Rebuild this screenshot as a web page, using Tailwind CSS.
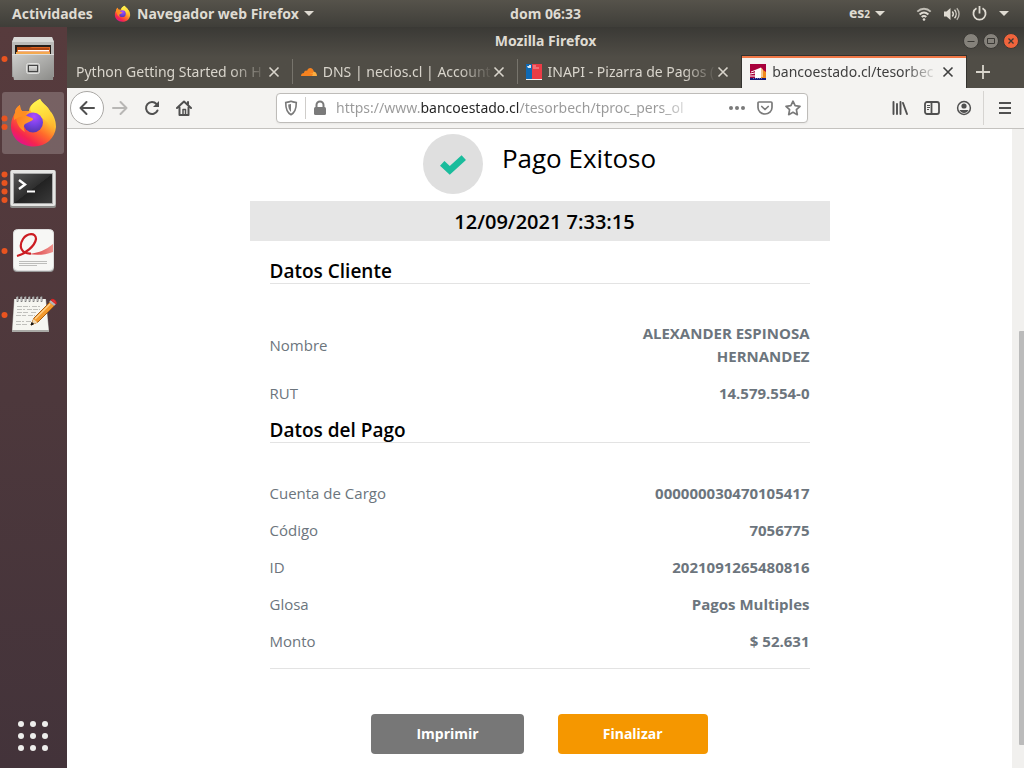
<!DOCTYPE html>
<html lang="es">
<head>
<meta charset="utf-8">
<meta name="viewport" content="width=device-width, initial-scale=1">
<title>Mozilla Firefox</title>
<script src="https://cdn.jsdelivr.net/npm/@tailwindcss/browser@4"></script>
</head>
<body class="flex h-screen flex-col overflow-hidden bg-white font-['Noto_Sans','Open_Sans',sans-serif]">

<!-- System bar -->
<header class="grid h-[27px] shrink-0 grid-cols-[1fr_auto_1fr] items-center bg-linear-to-b from-[#56534b] to-[#3f3e39] text-[14px] leading-5 font-bold text-[#dfdbd2]">
  <div class="flex items-center">
    <button class="ml-3 w-[84px] text-left whitespace-nowrap">Actividades</button>
    <button class="ml-[18px] flex items-center gap-[6px] whitespace-nowrap">
      <svg class="size-[17px]" viewBox="10 5 47 50"><use href="#fox"/></svg>
      Navegador web Firefox
      <svg class="-ml-[1px] h-[5px] w-[10px]" viewBox="0 0 10 5"><path d="M0 0h10L5 5z" fill="currentColor"/></svg>
    </button>
  </div>
  <button class="pl-[67px]">dom 06:33</button>
  <div class="flex items-center justify-end gap-[10px] pr-[15px]">
    <button class="mr-[21px] flex items-center gap-[5px]"><span>es<span class="text-[10px]">2</span></span>
      <svg class="h-[5px] w-[10px]" viewBox="0 0 10 5"><path d="M0 0h10L5 5z" fill="currentColor"/></svg></button>
    <button aria-label="Sistema" class="flex items-center gap-3">
      <svg class="h-[14px] w-4" viewBox="0 0 16 14" fill="none" stroke="currentColor" stroke-width="2"><path d="M1.3 4.6c4-3.8 9.400-3.800 13.400 0" opacity=".8"/><path d="M3.600 7.400c2.700-2.400 6.100-2.400 8.800 0"/><path d="M5.700 10c1.400-1.200 3.200-1.200 4.600 0"/><circle cx="8" cy="12.500" r="1.300" fill="currentColor" stroke="none"/></svg>
      <svg class="h-[14px] w-4" viewBox="0 0 16 14" fill="none" stroke="currentColor" stroke-width="1.400"><path d="M0 4.500h2.500L6.500 1v12l-4-3.500H0z" fill="currentColor" stroke="none"/><path d="M8.300 4.500c1.200 1.400 1.200 3.600 0 5M10.500 2.800c2.200 2.400 2.200 6 0 8.400"/><path d="M12.800 1.200c3 3.300 3 8.300 0 11.600" opacity=".75"/></svg>
      <svg class="size-[15px]" viewBox="0 0 15 15" fill="none" stroke="currentColor" stroke-width="1.800"><path d="M4.500 2.300a6.100 6.100 0 1 0 6 0M7.500 0v7.500"/></svg>
      <svg class="h-[5px] w-[10px]" viewBox="0 0 10 5"><path d="M0 0h10L5 5z" fill="currentColor"/></svg>
    </button>
  </div>
</header>

<div class="flex min-h-0 flex-1">

  <!-- Dock -->
  <nav aria-label="Dock" class="flex w-[67px] shrink-0 flex-col gap-[2px] bg-linear-to-b from-[#573b3d] via-[#4d383c] to-[#43333a] pt-px">
    <button aria-label="Archivos" class="h-[62px]">
      <svg width="67" height="62" viewBox="0 0 67 62">
        <defs><linearGradient id="g1" x2="1" y2="1"><stop stop-color="#cfcfcd"/><stop offset="1" stop-color="#8b8b88"/></linearGradient>
        <linearGradient id="g2" x2="0" y2="1"><stop stop-color="#e4e4e2"/><stop offset="1" stop-color="#adadab"/></linearGradient></defs>
        <circle cx="4.500" cy="31" r="3" fill="#e95420"/>
        <path d="M14 9h38l2 5v35H12V14z" fill="#9a9a98"/><path d="M14 9h38l2 5H12z" fill="#d9d9d7"/><path d="M12 14h42v12H12z" fill="#bcbcba"/>
        <rect x="15" y="17" width="36" height="10" fill="#26201c"/><path d="M17 19h33v8H17z" fill="#dd6421"/><path d="M17 19h13l2 1h17v2H17z" fill="#b04612"/><path d="M18 22h31v1.500H18z" fill="#fff"/><path d="M16 24h34v3H16z" fill="#f4a94f"/>
        <path d="M12 26h42l-1 26H14L13 47z" fill="url(#g1)"/><path d="M12 26h42v1H12z" fill="#ddd"/>
        <rect x="26.500" y="35.500" width="13" height="10" rx="2" fill="#b5b5b3" stroke="#e1e1df"/><rect x="28.500" y="37.500" width="9" height="6" fill="url(#g2)" stroke="#454545"/>
      </svg>
    </button>
    <button aria-label="Firefox" class="mx-[2px] mr-[3px] h-[62px] rounded-[3px] bg-white/20">
      <svg class="-ml-[2px] max-w-none" width="67" height="62" viewBox="0 0 67 62">
        <defs>
          <linearGradient id="fg" x1=".85" y1=".05" x2=".25" y2=".95"><stop stop-color="#fff44f"/><stop offset=".35" stop-color="#ffbd2f"/><stop offset=".6" stop-color="#ff6a2b"/><stop offset=".85" stop-color="#f5254f"/><stop offset="1" stop-color="#e31587"/></linearGradient>
          <radialGradient id="fp" cx=".55" cy=".2" r=".8"><stop stop-color="#b14dff"/><stop offset=".5" stop-color="#7a42e6"/><stop offset="1" stop-color="#5536b0"/></radialGradient>
          <linearGradient id="fo" x2="1" y2=".3"><stop stop-color="#ff7a1c"/><stop offset="1" stop-color="#ffa02e"/></linearGradient>
          <linearGradient id="fy" x1=".4" x2=".7" y2="1"><stop stop-color="#fff44f"/><stop offset=".5" stop-color="#ffd638"/><stop offset="1" stop-color="#ff9a2b" stop-opacity=".2"/></linearGradient>
          <g id="fox">
            <path d="M40 7c2 4 6 6 8 9 1 2 2 3 2 5l1-1c4 5 5 11 5 15-1 11-10 19.500-22 19.500C20 54.500 11 45 11 34c0-6 2-10 4-13 0-4 2-6 5-8 0 3 1 5 2 6h7c0-5 5-9 11-12z" fill="url(#fg)"/>
            <path d="M40 7c2 4 6 6 8 9 7 8 9 20 2 28 2-8 0-12-4-15-3-3-7-5-11-7-4-1-6-4-4-8 2-3 5-5 9-7z" fill="url(#fy)"/>
            <circle cx="33" cy="30.500" r="10" fill="url(#fp)"/>
            <path d="M16 25c3-3 8-3 11-1l5 2c2 1 1 2-1 3l-6 3c-2 2-1 5 0 8-4-2-9-8-9-15z" fill="url(#fo)"/>
            <path d="M20 13c0 3 1 5 2 6h7c-3 2-4 4-4 6-4-1-7 0-11 3 0-3 0-5 1-7 0-4 2-6 5-8z" fill="#ff8d22"/>
          </g>
        </defs>
        <circle cx="4.500" cy="26.500" r="3" fill="#e95420"/><circle cx="4.500" cy="35" r="3" fill="#e95420"/>
        <use href="#fox"/>
      </svg>
    </button>
    <button aria-label="Terminal" class="h-[62px]">
      <svg width="67" height="62" viewBox="0 0 67 62">
        <defs><linearGradient id="t1" x2="1" y2="1"><stop stop-color="#555"/><stop offset=".5" stop-color="#2f2f2f"/><stop offset=".51" stop-color="#222"/><stop offset="1" stop-color="#3a3a3a"/></linearGradient></defs>
        <g fill="#e95420"><circle cx="4.500" cy="18.500" r="3"/><circle cx="4.500" cy="27" r="3"/><circle cx="4.500" cy="35.500" r="3"/><circle cx="4.500" cy="44" r="3"/></g>
        <rect x="10" y="14" width="46" height="38" rx="2" fill="#8c8c8a"/><rect x="10.500" y="14" width="45" height="36" rx="2" fill="#e6e6e4"/><rect x="13" y="17" width="40" height="31" fill="#aaa"/>
        <rect x="14" y="18" width="38" height="29" fill="url(#t1)"/>
        <path d="M19 24l6 4.500-6 4.500" fill="none" stroke="#fff" stroke-width="2.400"/><path d="M27 35.500h8" stroke="#fff" stroke-width="2"/>
      </svg>
    </button>
    <button aria-label="Visor de documentos" class="h-[62px]">
      <svg width="67" height="62" viewBox="0 0 67 62">
        <defs><linearGradient id="p1" x1="0" x2="1"><stop stop-color="#d8343a"/><stop offset="1" stop-color="#f0938e"/></linearGradient></defs>
        <circle cx="4.500" cy="31" r="3" fill="#e95420"/>
        <rect x="13" y="10" width="41" height="42" rx="4" fill="#999"/><rect x="13.500" y="9.500" width="40" height="41" rx="4" fill="#f7f7f5" stroke="#ddd"/>
        <path d="M29 34c9-1 17-4 24-10v8c-8 3-16 3.500-24 2z" fill="url(#p1)"/>
        <path d="M17 36C25 34 35 26 36 19 36 12 27 13 23 19 18 27 22 34 31 33.500" fill="none" stroke="#cc1c22" stroke-width="2.200"/>
        <path d="M19 41.500h28M19 43.500h28M19 45.500h18" stroke="#bdbdbb"/>
      </svg>
    </button>
    <button aria-label="Editor de textos" class="h-[62px]">
      <svg width="67" height="62" viewBox="0 0 67 62">
        <circle cx="4.500" cy="31" r="3" fill="#e95420"/>
        <path d="M14 15h32l3 31v2H12v-2z" fill="#a9a9a5"/><path d="M14.500 15h31l3 31H12.500z" fill="#f6f6f1"/>
        <path d="M17.500 17v-4M21.500 17v-4M25.500 17v-4M29.500 17v-4M33.500 17v-4M37.500 17v-4M41.500 17v-4" stroke="#777" stroke-width="2" stroke-linecap="round"/><path d="M17 17v-4M21 17v-4M25 17v-4M29 17v-4M33 17v-4M37 17v-4M41 17v-4" stroke="#eee"/>
        <path d="M17 22.500h13m2 0h8M17 25.500h8m2 0h13M17 28.500h12m2 0h6M16 31.500h10m2 0h7M16 37.500h8m2 0h6M16 40.500h11" stroke="#c0c0bc" stroke-dasharray="5 1"/>
        <path d="M31 41l3-7 16-16 4 4-16 16z" fill="#f39a2d" stroke="#a85d10"/><path d="M35 35l15-15" stroke="#ffd08a" stroke-width="1.500"/><path d="M31 41l2.500-6 4 3.500z" fill="#f3d8ad"/><path d="M31 41l1-2.500 1.500 1.500z" fill="#111" stroke="#111"/>
        <path d="M49 18l2-2 5 4-2 2z" fill="#b8b8b6"/><path d="M51 16c2-2 6 1 5 4z" fill="#e03838" stroke="#d22"/>
      </svg>
    </button>
    <button aria-label="Mostrar aplicaciones" class="mt-auto mb-[17px] ml-[18px] grid grid-cols-[6px_6px_6px] gap-[6px] self-start text-[#eeeeec]">
      <i class="size-[6px] rounded-full bg-current"></i><i class="size-[6px] rounded-full bg-current"></i><i class="size-[6px] rounded-full bg-current"></i>
      <i class="size-[6px] rounded-full bg-current"></i><i class="size-[6px] rounded-full bg-current"></i><i class="size-[6px] rounded-full bg-current"></i>
      <i class="size-[6px] rounded-full bg-current"></i><i class="size-[6px] rounded-full bg-current"></i><i class="size-[6px] rounded-full bg-current"></i>
    </button>
  </nav>

  <!-- Browser window -->
  <section class="flex min-w-0 flex-1 flex-col">
    <div class="shrink-0 bg-linear-to-b from-[#3a3935] to-[#504d46] to-50%">
      <div class="grid h-7 grid-cols-[1fr_auto_1fr] items-center">
        <h1 class="col-start-2 text-[14px] leading-5 font-bold text-[#dfdbd2]">Mozilla Firefox</h1>
        <div class="flex justify-end gap-1 pr-[5px] text-[#3a3935]">
          <button aria-label="Minimizar"><svg class="size-4" viewBox="0 0 16 16" fill="none" stroke="currentColor"><circle cx="8" cy="8" r="7.500" fill="#85827b"/><path d="M4.500 8.500h7"/></svg></button>
          <button aria-label="Maximizar"><svg class="size-4" viewBox="0 0 16 16" fill="none" stroke="currentColor"><circle cx="8" cy="8" r="7.500" fill="#85827b"/><path d="M4.500 5.500h7v5h-7z"/></svg></button>
          <button aria-label="Cerrar"><svg class="size-4" viewBox="0 0 16 16" fill="none" stroke="currentColor"><circle cx="8" cy="8" r="7.500" fill="#f0643c"/><path d="M5.500 5.500l5 5m0-5l-5 5" stroke-width="1.300"/></svg></button>
        </div>
      </div>
      <div class="flex h-[33px] text-[14px] leading-5 text-[#d9d5cc]">
        <div class="flex min-w-0 flex-1 items-center pr-3 pl-[9px]">
          <a href="#" class="min-w-0 flex-1 whitespace-nowrap [mask-image:linear-gradient(90deg,#000_80%,transparent)]">Python Getting Started on H</a>
          <button aria-label="Cerrar pestaña"><svg class="size-3" viewBox="0 0 12 12" stroke="currentColor" stroke-width="1.600"><path d="M1.500 1.500l9 9m0-9l-9 9"/></svg></button>
        </div>
        <div class="my-1 w-px bg-[#77746c]"></div>
        <div class="flex min-w-0 flex-1 items-center pr-3 pl-2">
          <svg class="mr-[6px] size-4 shrink-0" viewBox="0 0 16 16"><path d="M0 12c0-2 1-3 3-3 0-2 2-3 3-2 1-4 6-4 7 1l-1 4z" fill="#f6821f"/><path d="M12 8c2-1 4 1 4 4h-5l1-2-4-.5 4-.3z" fill="#fbad41"/></svg>
          <a href="#" class="min-w-0 flex-1 whitespace-nowrap [mask-image:linear-gradient(90deg,#000_80%,transparent)]">DNS | necios.cl | Account</a>
          <button aria-label="Cerrar pestaña"><svg class="size-3" viewBox="0 0 12 12" stroke="currentColor" stroke-width="1.600"><path d="M1.500 1.500l9 9m0-9l-9 9"/></svg></button>
        </div>
        <div class="my-1 w-px bg-[#77746c]"></div>
        <div class="flex min-w-0 flex-1 items-center pr-3 pl-2">
          <svg class="mr-[6px] size-4 shrink-0" viewBox="0 0 16 16"><path d="M0 0h6v15H0z" fill="#0f69b4"/><path d="M6 0h10v15H6z" fill="#eb3c46"/><path d="M0 15h16v1H0z" fill="#eee"/><path d="M1 2h4v2H2zM3 1h2v1H3z" fill="#d7e6f2"/><path d="M7 2h3M7 4h6" stroke="#f5a4a8"/></svg>
          <a href="#" class="min-w-0 flex-1 whitespace-nowrap [mask-image:linear-gradient(90deg,#000_80%,transparent)]">INAPI - Pizarra de Pagos (</a>
          <button aria-label="Cerrar pestaña"><svg class="size-3" viewBox="0 0 12 12" stroke="currentColor" stroke-width="1.600"><path d="M1.500 1.500l9 9m0-9l-9 9"/></svg></button>
        </div>
        <div class="flex min-w-0 flex-1 items-center border-x border-t border-x-[#33322e] border-t-[#33322e] bg-[#f4f3f1] pr-3 pl-2 text-[#3f3f3f] shadow-[inset_0_2px_0_#f07746]">
          <svg class="mr-[6px] size-4 shrink-0" viewBox="0 0 16 16"><path d="M0 0h16v14H0z" fill="#a8003c"/><path d="M10 4l6 4v6h-6z" fill="#f08a1d"/><path d="M5 6l6-2.500V14H5z" fill="#fff"/><path d="M11 3.500l2 2V13h-2z" fill="#f8c48a"/><path d="M1 8l4-1.500M0 10l5-1M0 12h5" stroke="#fff"/><path d="M0 14h16v2H0z" fill="#14197c"/><path d="M3 14.500h10" stroke="#6a6fb5" stroke-dasharray="1 1"/></svg>
          <a href="#" class="min-w-0 flex-1 whitespace-nowrap [mask-image:linear-gradient(90deg,#000_80%,transparent)]">bancoestado.cl/tesorbec</a>
          <button aria-label="Cerrar pestaña" class="ml-1"><svg class="size-3" viewBox="0 0 12 12" stroke="currentColor" stroke-width="1.600"><path d="M1.500 1.500l9 9m0-9l-9 9"/></svg></button>
        </div>
        <button aria-label="Nueva pestaña" class="w-[57px] pl-[9px]"><svg class="size-[14px]" viewBox="0 0 14 14" stroke="currentColor" stroke-width="1.800"><path d="M7 0v14M0 7h14"/></svg></button>
      </div>
    </div>

    <div class="flex h-[41px] shrink-0 items-center border-b border-[#c4c2bf] bg-[#f4f3f1] pr-[13px] pl-[3px] text-[#505050]">
      <button aria-label="Atrás" class="flex size-[34px] items-center justify-center rounded-full border border-[#aaa8a5] bg-white"><svg class="size-4" viewBox="0 0 16 16" fill="none" stroke="currentColor" stroke-width="2" stroke-linecap="round" stroke-linejoin="round"><path d="M15 8H1.500M7.500 2l-6 6 6 6"/></svg></button>
      <button aria-label="Adelante" class="ml-2 text-[#b8b7b5]"><svg class="size-4" viewBox="0 0 16 16" fill="none" stroke="currentColor" stroke-width="2" stroke-linecap="round" stroke-linejoin="round"><path d="M1 8h13.500M8.500 2l6 6-6 6"/></svg></button>
      <button aria-label="Recargar" class="ml-4"><svg class="size-4" viewBox="0 0 16 16" fill="none" stroke="currentColor" stroke-width="2" stroke-linecap="round"><path d="M13.500 10.500A6 6 0 1 1 12.500 4"/><path d="M15 1v6H9z" fill="currentColor" stroke="none"/></svg></button>
      <button aria-label="Inicio" class="ml-4"><svg class="size-4" viewBox="0 0 16 16" fill="none" stroke="currentColor" stroke-width="2" stroke-linecap="round" stroke-linejoin="round"><path d="M1 8l7-6.500L15 8M3.500 7.500V15h9V7.500"/><path d="M7 14V9.500h2.500V14" stroke-width="1.500"/><path d="M12 2v2"/></svg></button>
      <div class="ml-[84px] flex h-[30px] min-w-0 flex-1 items-center rounded-[4px] border border-[#bebcb9] bg-white pr-[6px] pl-[6px] text-[#7a7a7a] shadow-xs">
        <svg class="size-4 shrink-0" viewBox="0 0 16 16" fill="none" stroke="currentColor" stroke-width="1.600"><path d="M8 1.300c2 .9 4 1 5.300 1.200C13.300 8 12.500 12.500 8 14.700 3.500 12.500 2.700 8 2.700 2.500 4 2.300 6 2.200 8 1.300z"/><path d="M8 4v8C5.700 10 5.300 7.500 5.200 4.600z" fill="currentColor" stroke="none"/></svg>
        <div class="mx-[6px] h-[22px] w-px shrink-0 bg-[#cfcdca]"></div>
        <svg class="size-4 shrink-0" viewBox="0 0 16 16" fill="none" stroke="currentColor" stroke-width="2"><path d="M4.500 8V5a3.500 3.500 0 0 1 7 0v3"/><rect x="2" y="7" width="12" height="8" rx="1.500" fill="currentColor" stroke="none"/></svg>
        <input aria-label="Dirección" value="https://www.bancoestado.cl/tesorbech/tproc_pers_ol" class="ml-2 w-full max-w-[360px] min-w-0 flex-1 bg-[linear-gradient(90deg,#999_0_85px,#222_85px_183px,#999_183px_325px,transparent_362px)] bg-clip-text text-[14px] leading-5 text-transparent outline-none">
        <div class="ml-auto flex shrink-0 items-center gap-3">
          <button aria-label="Acciones"><svg class="size-4" viewBox="0 0 16 16" fill="currentColor"><circle cx="2" cy="8" r="2"/><circle cx="8" cy="8" r="2"/><circle cx="14" cy="8" r="2"/></svg></button>
          <button aria-label="Guardar en Pocket"><svg class="size-4" viewBox="0 0 16 16" fill="none" stroke="currentColor" stroke-width="1.700" stroke-linecap="round" stroke-linejoin="round"><path d="M2 2h12q1 0 1 1v4.500a7 6.500 0 0 1-14 0V3q0-1 1-1z"/><path d="M4.800 6.500L8 9.500l3.200-3"/></svg></button>
          <button aria-label="Añadir a marcadores"><svg class="size-4" viewBox="0 0 16 16" fill="none" stroke="currentColor" stroke-width="1.700" stroke-linejoin="round"><path d="M8 1.200l2.100 4.500 4.900.6-3.600 3.400.9 5L8 12.300l-4.300 2.400.9-5L1 6.300l4.900-.6z"/></svg></button>
        </div>
      </div>
      <div class="ml-[84px] flex items-center gap-4">
        <button aria-label="Biblioteca"><svg class="size-4" viewBox="0 0 16 16" fill="none" stroke="currentColor" stroke-width="1.900" stroke-linecap="round"><path d="M1.500 2v12M5 4v10M8.500 2v12M11 3l4 11"/></svg></button>
        <button aria-label="Barra lateral"><svg class="size-4" viewBox="0 0 16 16" fill="none" stroke="currentColor" stroke-width="1.800"><rect x="1" y="2" width="14" height="12" rx="2"/><path d="M7.500 2v12"/><path d="M3 5.500h3M3 7.500h3M3 9.500h2" stroke-width="1"/></svg></button>
        <button aria-label="Cuenta"><svg class="size-4" viewBox="0 0 16 16" fill="none" stroke="currentColor"><circle cx="8" cy="8" r="6.400" stroke-width="1.500"/><circle cx="8" cy="6" r="2.600" fill="currentColor" stroke="none"/><path d="M3.500 10h9c-1 2-2.500 3-4.500 3s-3.500-1-4.500-3z" fill="currentColor" stroke="none"/></svg></button>
      </div>
      <div class="mr-[13px] ml-[11px] h-[34px] w-px bg-[#d6d4d1]"></div>
      <button aria-label="Menú"><svg class="ml-[2px] h-4 w-3" viewBox="0 0 12 16" stroke="currentColor" stroke-width="1.800"><path d="M0 3h12M0 8h12M0 13h12"/></svg></button>
    </div>

    <!-- Page -->
    <div class="flex min-h-0 flex-1">
      <main class="min-w-0 flex-1 overflow-hidden bg-white font-['Open_Sans','Noto_Sans',sans-serif]">
        <div class="mx-auto max-w-[580px] pt-[5px]">
          <div class="flex h-[60px] justify-center gap-[19px]">
            <div class="flex size-[60px] items-center justify-center rounded-full bg-[#dfdfdf]">
              <svg class="h-[22px] w-7" viewBox="0 0 26 20" aria-label="Correcto"><path d="M3 9.500l7 6.500 13-12" fill="none" stroke="#1abc9c" stroke-width="6" stroke-linejoin="miter"/></svg>
            </div>
            <h2 class="pt-[6px] text-[26px] leading-[36px] whitespace-nowrap text-black">Pago Exitoso</h2>
          </div>
          <p class="mt-[7px] bg-[#e6e6e6] pt-px pl-[10px] text-center text-[20px] leading-[39px] font-semibold text-black">12/09/2021 7:33:15</p>
          <div class="px-5 pt-[18px] text-[15px] leading-[23px] text-[#6c757d]">
            <h3 class="border-b border-[#e3e3e3] text-[19px] leading-6 font-semibold text-black">Datos Cliente</h3>
            <table class="mt-[31px] w-full table-fixed">
              <tr><th scope="row" class="w-2/3 py-[7px] text-left font-normal">Nombre</th><td class="w-1/3 py-[7px] text-right font-bold">ALEXANDER ESPINOSA HERNANDEZ</td></tr>
              <tr><th scope="row" class="py-[7px] text-left font-normal">RUT</th><td class="py-[7px] text-right font-bold">14.579.554-0</td></tr>
            </table>
            <h3 class="mt-[6px] border-b border-[#e3e3e3] text-[19px] leading-6 font-semibold text-black">Datos del Pago</h3>
            <table class="mt-8 w-full table-fixed">
              <tr><th scope="row" class="w-2/3 py-[7px] text-left font-normal">Cuenta de Cargo</th><td class="w-1/3 py-[7px] text-right font-bold">000000030470105417</td></tr>
              <tr><th scope="row" class="py-[7px] text-left font-normal">Código</th><td class="py-[7px] text-right font-bold">7056775</td></tr>
              <tr><th scope="row" class="py-[7px] text-left font-normal">ID</th><td class="py-[7px] text-right font-bold">2021091265480816</td></tr>
              <tr><th scope="row" class="py-[7px] text-left font-normal">Glosa</th><td class="py-[7px] text-right font-bold">Pagos Multiples</td></tr>
              <tr><th scope="row" class="py-[7px] text-left font-normal">Monto</th><td class="py-[7px] text-right font-bold">$ 52.631</td></tr>
            </table>
            <hr class="mt-2 border-[#e3e3e3]">
          </div>
          <div class="mt-[45px] flex justify-center gap-[34px] text-[14px] leading-5 font-bold text-white">
            <button class="h-10 rounded-[4px] bg-[#777] px-[45px]">Imprimir</button>
            <button class="h-10 rounded-[4px] bg-[#f59700] px-[45px]">Finalizar</button>
          </div>
        </div>
      </main>
      <div class="flex w-3 shrink-0 flex-col items-end bg-[#f1f0ee]">
        <div class="grow-[202]"></div>
        <div class="w-[5px] grow-[414] rounded-l-[1px] bg-[#bbb]"></div>
        <div class="grow-[23]"></div>
      </div>
    </div>
  </section>
</div>
</body>
</html>
